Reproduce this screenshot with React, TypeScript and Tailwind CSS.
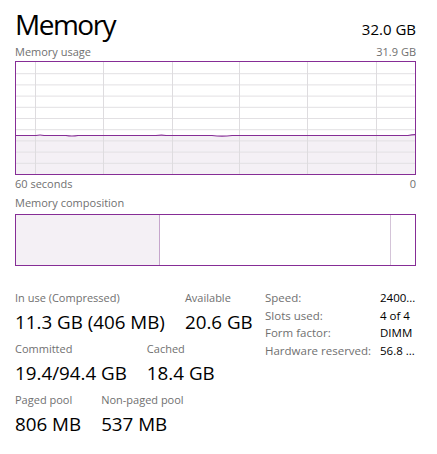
const FONT = "font-['Open_Sans','Noto_Sans',sans-serif]";

const H_LINES = [1, 2, 3, 4, 5, 6, 7, 8, 9];
const V_LINES = [19, 87, 156, 223, 291, 360];

function UsageChart() {
  // inner drawing area 399 x 112
  const line =
    "M0 73.5 L20 73.5 Q24 72.5 28 73.5 L50 73.5 Q56 74.5 62 73.5 L140 73.5 Q146 72.8 150 73.5 L196 73.5 Q206 74.6 216 73.5 L392 73.5 Q396 72.6 399 72.6";
  return (
    <div className="h-[114px] border border-[#862d96] bg-white">
      <svg width="399" height="112" className="block">
        <path d={`${line} L399 112 L0 112 Z`} fill="#f4f0f5" />
        {H_LINES.map((i) => (
          <line key={i} x1="0" x2="399" y1={i * 11.2 + 0.5} y2={i * 11.2 + 0.5} stroke="#e2e0e3" strokeWidth="1" />
        ))}
        {V_LINES.map((x) => (
          <line key={x} x1={x + 0.5} x2={x + 0.5} y1="0" y2="112" stroke="#dedcdf" strokeWidth="1" />
        ))}
        <path d={line} fill="none" stroke="#862d96" strokeWidth="1.2" />
      </svg>
    </div>
  );
}

function Stat({ label, value }: { label: string; value: string }) {
  return (
    <div className="flex flex-col">
      <span className="text-[11px] leading-[18px] text-[#707070]">{label}</span>
      <span className="text-[18.8px] leading-[30px] text-black">{value}</span>
    </div>
  );
}

const DETAILS = [
  ["Speed:", "2400..."],
  ["Slots used:", "4 of 4"],
  ["Form factor:", "DIMM"],
  ["Hardware reserved:", "56.8 ..."],
];

export default function App() {
  return (
    <div className={`h-[454px] w-[437px] bg-white pl-[15px] pr-[21px] pt-[4px] ${FONT}`}>
      <div className="flex items-start justify-between">
        <span className="text-[28px] leading-[40px] tracking-[-1.5px] text-black">Memory</span>
        <span className="mt-[15px] text-[15px] leading-[20px] text-black">32.0 GB</span>
      </div>

      <div className="flex justify-between text-[11px] leading-[16px] text-[#707070]">
        <span>Memory usage</span>
        <span>31.9 GB</span>
      </div>
      <div className="mt-[1px]">
        <UsageChart />
      </div>
      <div className="mt-[1px] flex justify-between text-[11px] leading-[16px] text-[#707070]">
        <span>60 seconds</span>
        <span>0</span>
      </div>

      <div className="mt-[3px] text-[11px] leading-[16px] text-[#707070]">Memory composition</div>
      <div className="mt-[3px] flex h-[52px] border border-[#862d96]">
        <div className="w-[143px] bg-[#f4f0f5]" />
        <div className="w-px bg-[#c6a6cc]" />
        <div className="w-[230px] bg-white" />
        <div className="w-px bg-[#d4c4d8]" />
        <div className="flex-1 bg-white" />
      </div>

      <div className="mt-[23px] flex items-start justify-between">
        <div className="flex flex-col gap-[3px]">
          <div className="flex gap-5">
            <Stat label="In use (Compressed)" value="11.3 GB (406 MB)" />
            <Stat label="Available" value="20.6 GB" />
          </div>
          <div className="flex gap-5">
            <Stat label="Committed" value="19.4/94.4 GB" />
            <Stat label="Cached" value="18.4 GB" />
          </div>
          <div className="flex gap-5">
            <Stat label="Paged pool" value="806 MB" />
            <Stat label="Non-paged pool" value="537 MB" />
          </div>
        </div>
        <div className="mr-[-21px] grid w-[172px] grid-cols-[115px_1fr] content-start text-[11.5px] leading-[17.6px]">
          {DETAILS.map(([k, v]) => (
            <div key={k} className="contents">
              <span className="text-[#707070]">{k}</span>
              <span className="text-black">{v}</span>
            </div>
          ))}
        </div>
      </div>
    </div>
  );
}
